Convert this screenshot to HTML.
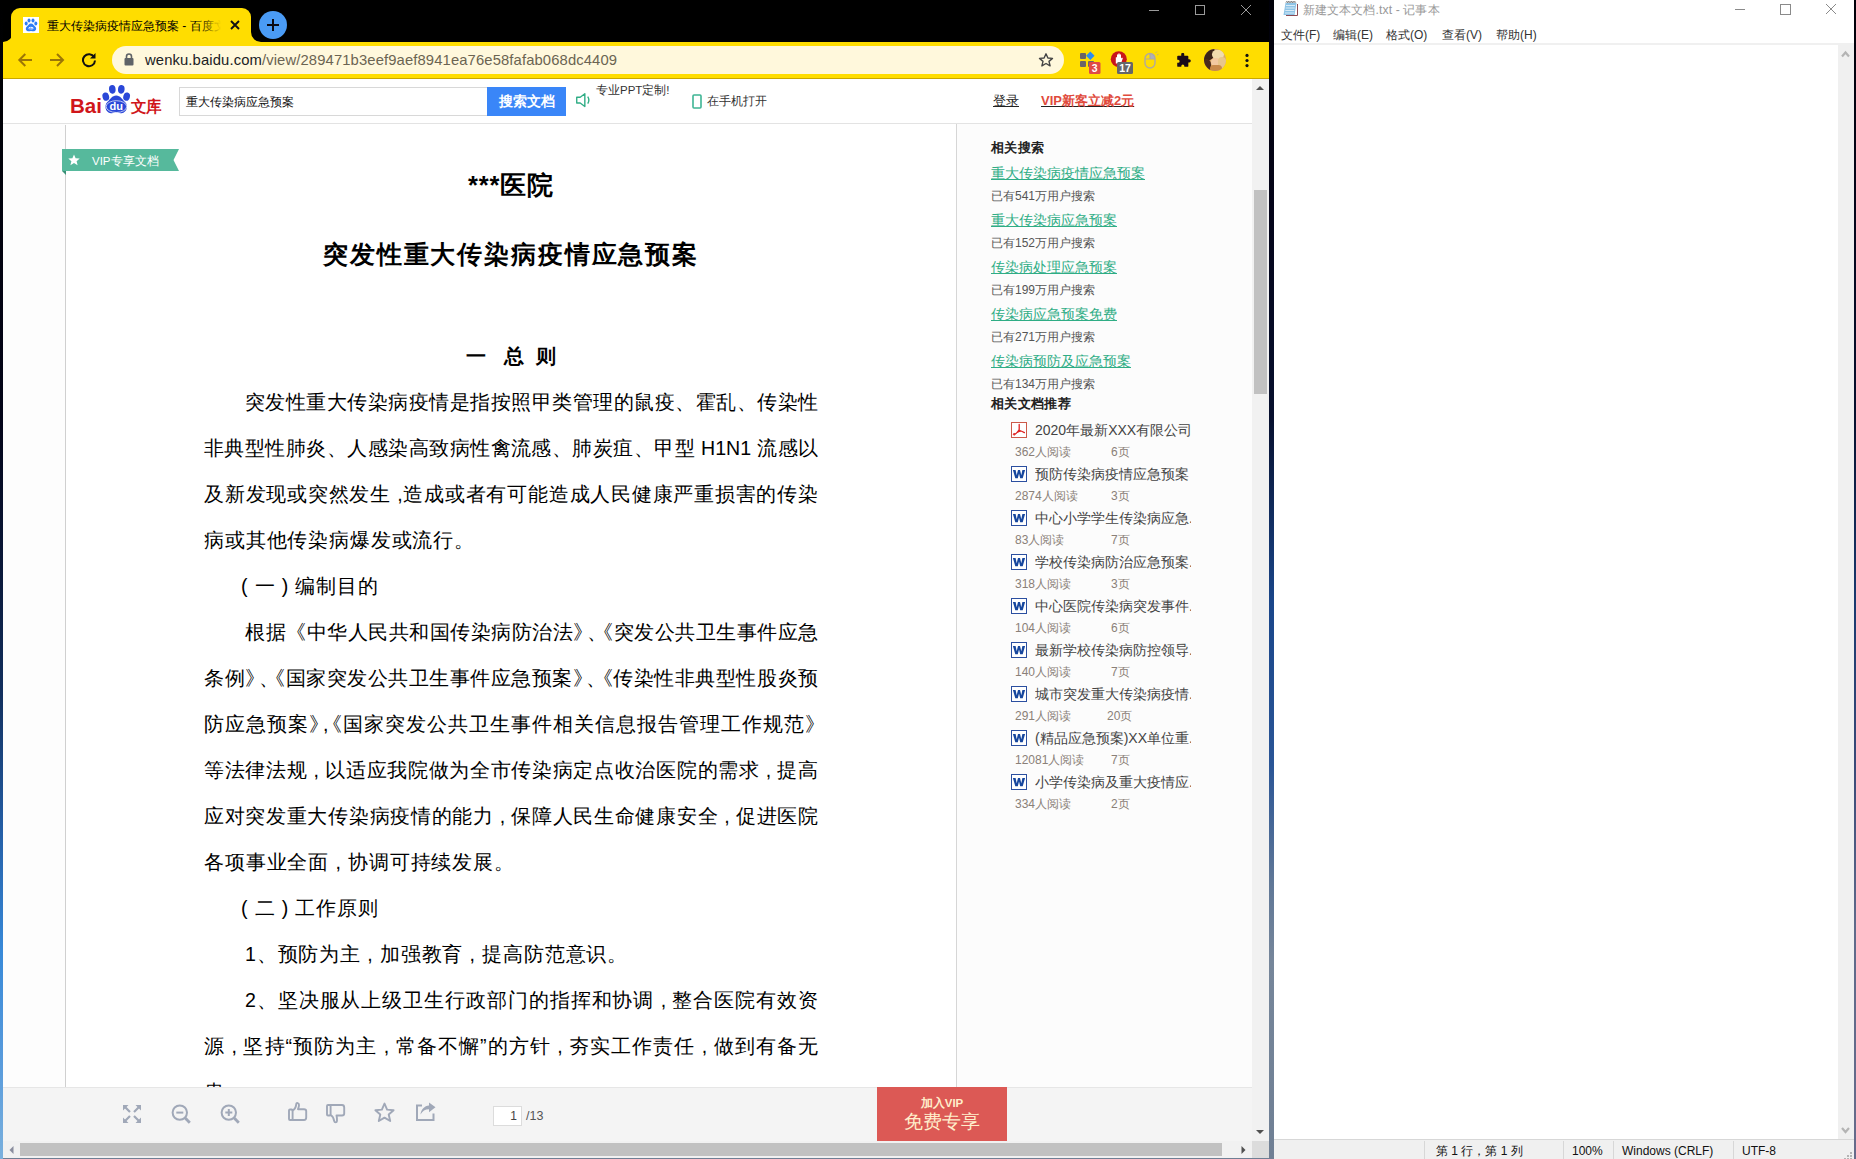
<!DOCTYPE html>
<html lang="zh">
<head>
<meta charset="utf-8">
<title>screen</title>
<style>
*{box-sizing:border-box;margin:0;padding:0}
html,body{width:1856px;height:1159px;overflow:hidden;background:#06061a;font-family:"Liberation Sans",sans-serif;}
.abs{position:absolute}
#chrome{position:absolute;left:3px;top:0;width:1266px;height:1159px;background:#000;overflow:hidden}
#tabbar{position:absolute;left:0;top:0;width:1266px;height:42px;background:#000}
#tab{position:absolute;left:8px;top:8px;width:240px;height:34px;background:#ffdd00;border-radius:9px 9px 0 0}
#toolbar{position:absolute;left:0;top:42px;width:1266px;height:37px;background:#ffdd00;border-bottom:1px solid #c9a800}
#omni{position:absolute;left:109px;top:4px;width:952px;height:28px;border-radius:14px;background:#fff8dc}
#page{position:absolute;left:0;top:79px;width:1249px;height:1062px;background:#fdfdfd;overflow:hidden}
#hdr{position:absolute;left:0;top:0;width:1250px;height:45px;background:#fff;border-bottom:1px solid #e3e3e3}
#doc{position:absolute;left:62px;top:45px;width:892px;height:970px;background:#fff;border-left:1px solid #d0d0d0;border-right:1px solid #d6d6d6}
.ln{position:absolute;left:138px;width:614px;height:30px;line-height:30px;font-size:19.600px;color:#000;white-space:nowrap;text-align:justify;text-align-last:justify;letter-spacing:0}
.ln i{font-style:normal;margin-right:-0.360em}.ln b{font-weight:normal;margin-left:-0.360em}
.ln.in{left:179px;width:573px}
.ln.l{text-align:left;text-align-last:left;letter-spacing:0.850px;width:auto}
#side{position:absolute;left:954px;top:45px;width:295px;height:970px;background:#fcfcfc}
#side .h{position:absolute;left:34px;font-size:13.400px;letter-spacing:0.350px;margin-top:1px;font-weight:bold;color:#222;white-space:nowrap;line-height:16px}
#side .a{position:absolute;left:34px;font-size:14px;color:#2fad85;text-decoration:underline;white-space:nowrap;line-height:16px}
#side .g{position:absolute;left:34px;font-size:12px;color:#555;white-space:nowrap;line-height:16px}
.it{position:absolute;left:54px;width:184px;height:44px}
.it .ic{position:absolute;left:0;top:0;width:16px;height:16px}
.it .t{position:absolute;left:24px;top:-1px;width:156px;overflow:hidden;white-space:nowrap;font-size:14px;color:#444;line-height:18px}
.it .r{position:absolute;left:4px;top:22px;font-size:12px;color:#8a8078;line-height:16px;white-space:nowrap}
.it .p{position:absolute;left:100px;top:22px;font-size:12px;color:#8a8078;line-height:16px;white-space:nowrap}
#bbar{position:absolute;left:0;top:1008px;width:1250px;height:54px;background:#f4f4f4;border-top:1px solid #e6e6e6}
#vsb{position:absolute;left:1249px;top:79px;width:17px;height:1062px;background:#f1f1f1}
#hsb{position:absolute;left:0;top:1141px;width:1266px;height:17px;background:#f1f1f1}
#np{position:absolute;left:1274px;top:0;width:580px;height:1159px;background:#fff;overflow:hidden}
#np .menu{position:absolute;top:27px;font-size:12px;color:#333;line-height:16px;white-space:nowrap}
#np .st{position:absolute;top:1143px;font-size:12px;color:#111;line-height:16px;white-space:nowrap}
#np .sep{position:absolute;top:1141px;width:1px;height:18px;background:#d7d7d7}
</style>
</head>
<body>
<div class="abs" style="left:0;top:0;width:4px;height:1159px;background:linear-gradient(to bottom,#000 0,#02030f 20%,#030418 36%,#0b1a3c 50%,#12305f 60%,#2560a8 72%,#3889d8 82%,#5a9cdc 92%,#7ab0dd 100%)"></div>
<div class="abs" style="left:1268px;top:0;width:7px;height:1159px;background:linear-gradient(to bottom,#000008 0,#05051a 18%,#07102e 36%,#1a468a 52%,#2a5596 66%,#5f7797 76%,#76869a 83%,#6f7f94 100%)"></div>
<div class="abs" style="left:1853px;top:0;width:3px;height:1159px;background:linear-gradient(to bottom,#000008 0,#05051a 18%,#07102e 36%,#1a3a70 52%,#3a4a78 66%,#5f6a8a 80%,#666a8a 100%)"></div>
<!-- CHROME WINDOW -->
<div id="chrome">
 <div id="tabbar">
  <div id="tab"></div>
  <!-- tab foot curves -->
  <svg class="abs" style="left:0;top:32px" width="10" height="10" viewBox="0 0 10 10"><path d="M0 10 H10 V0 A10 10 0 0 1 0 10Z" fill="#ffdd00"/></svg>
  <svg class="abs" style="left:248px;top:32px" width="10" height="10" viewBox="0 0 10 10"><path d="M10 10 H0 V0 A10 10 0 0 0 10 10Z" fill="#ffdd00"/></svg>
  <!-- favicon -->
  <svg class="abs" style="left:20px;top:17px" width="16" height="16" viewBox="0 0 16 16"><rect width="16" height="16" fill="#fff"/><g fill="#2f7df6"><ellipse cx="3.2" cy="6.6" rx="1.5" ry="2"/><ellipse cx="6" cy="3.4" rx="1.5" ry="2"/><ellipse cx="10" cy="3.4" rx="1.5" ry="2"/><ellipse cx="12.8" cy="6.6" rx="1.5" ry="2"/><path d="M8 6.5c2 0 3 2 4.3 3.3c1.5 1.5 1 4.2-1.3 4.4c-1.2.1-2-.3-3-.3s-1.8.4-3 .3c-2.300-.2-2.800-2.900-1.300-4.400c1.300-1.300 2.300-3.300 4.300-3.300z"/></g><ellipse cx="8" cy="11.300" rx="2.600" ry="1.500" fill="#fff"/><text x="8" y="12.600" font-size="3.600" font-weight="bold" text-anchor="middle" fill="#2f7df6" font-family="Liberation Sans, sans-serif">du</text></svg>
  <div class="abs" style="left:44px;top:17px;width:176px;height:18px;line-height:18px;font-size:12px;color:#000;white-space:nowrap;overflow:hidden">重大传染病疫情应急预案 - 百度文</div>
  <div class="abs" style="left:196px;top:14px;width:26px;height:22px;background:linear-gradient(to right,rgba(255,221,0,0),#ffdd00 85%)"></div>
  <svg class="abs" style="left:226px;top:19px" width="12" height="12" viewBox="0 0 12 12"><path d="M2 2 L10 10 M10 2 L2 10" stroke="#111" stroke-width="1.900" fill="none"/></svg>
  <!-- new tab -->
  <div class="abs" style="left:256px;top:11px;width:28px;height:28px;border-radius:14px;background:#4a9bf5"></div>
  <svg class="abs" style="left:263px;top:18px" width="14" height="14" viewBox="0 0 14 14"><path d="M7 1 V13 M1 7 H13" stroke="#0a0a14" stroke-width="2" fill="none"/></svg>
  <!-- window controls -->
  <svg class="abs" style="left:1140px;top:0" width="120" height="22" viewBox="0 0 120 22"><g stroke="#9a9a9a" stroke-width="1" fill="none"><path d="M6 10.500 H16"/><rect x="52.500" y="5.500" width="9" height="9"/><path d="M98 5 L108 15 M108 5 L98 15"/></g></svg>
 </div>
 <div id="toolbar">
  <svg class="abs" style="left:13px;top:10px" width="18" height="16" viewBox="0 0 18 16"><path d="M16 8 H4 M9.300 2 L3.300 8 L9.300 14" stroke="#9c7606" stroke-width="2" fill="none"/></svg>
  <svg class="abs" style="left:45px;top:10px" width="18" height="16" viewBox="0 0 18 16"><path d="M2 8 H14.500 M9 2 L15 8 L9 14" stroke="#9c7606" stroke-width="2" fill="none"/></svg>
  <svg class="abs" style="left:78px;top:10px" width="16" height="16" viewBox="0 0 16 16"><path d="M13.200 5.200 A6 6 0 1 0 14 8.500" stroke="#111" stroke-width="2" fill="none"/><path d="M14.500 1 V6.500 H9z" fill="#111"/></svg>
  <div id="omni">
   <svg class="abs" style="left:12px;top:7px" width="10" height="13" viewBox="0 0 10 13"><rect x="0.500" y="5" width="9" height="7.500" rx="1" fill="#5f6368"/><path d="M2.500 5.500 V3.500 A2.500 2.500 0 0 1 7.500 3.500 V5.500" stroke="#5f6368" stroke-width="1.600" fill="none"/></svg>
   <div class="abs" style="left:33px;top:4px;height:20px;line-height:20px;font-size:14.800px;color:#202124;white-space:nowrap;letter-spacing:0.120px">wenku.baidu.com<span style="color:#6b6452">/view/289471b3eef9aef8941ea76e58fafab068dc4409</span></div>
   <svg class="abs" style="left:926px;top:6px" width="16" height="16" viewBox="0 0 16 16"><path d="M8 1.800 L9.900 6 L14.500 6.400 L11 9.400 L12.100 13.900 L8 11.500 L3.900 13.900 L5 9.400 L1.500 6.400 L6.100 6z" stroke="#444" stroke-width="1.400" fill="none" stroke-linejoin="round"/></svg>
  </div>
  <!-- extensions -->
  <svg class="abs" style="left:1076px;top:6px" width="26" height="28" viewBox="0 0 26 28"><g fill="#6a6468"><rect x="1" y="5" width="6" height="6" rx="1"/><rect x="1" y="13" width="6" height="6" rx="1"/><rect x="9" y="13" width="6" height="6" rx="1"/></g><rect x="8.300" y="4.800" width="6" height="6" transform="rotate(45 11.300 7.800)" fill="#2b8cf0"/><rect x="10" y="14" width="11.500" height="12" rx="1.500" fill="#e04a46"/><text x="15.700" y="24" font-size="10.500" font-weight="bold" fill="#fff" text-anchor="middle" font-family="Liberation Sans, sans-serif">3</text></svg>
  <svg class="abs" style="left:1107px;top:6px" width="28" height="28" viewBox="0 0 28 28"><circle cx="8.800" cy="11.200" r="8" fill="#c8151b"/><path d="M5.800 15.500 V9.500 L6.300 9 L7 9.500 V6.800 L7.700 6.300 L8.300 6.800 V5.800 L9 5.300 L9.700 5.800 V6.800 L10.300 6.300 L11 6.800 V10.500 L12 9.500 L12.800 10.200 L11 15.500z" fill="#fff"/><rect x="7" y="14" width="16" height="12" rx="1.500" fill="#666668"/><text x="15" y="24" font-size="10.500" font-weight="bold" fill="#fff" text-anchor="middle" font-family="Liberation Sans, sans-serif">17</text></svg>
  <svg class="abs" style="left:1140px;top:7px" width="18" height="22" viewBox="0 0 18 22"><path d="M7 4.500 H8 A4 4 0 0 1 12 8.500 V10 H7z" fill="#aeb0ba"/><rect x="2" y="4.500" width="10" height="14.500" rx="5" stroke="#b0a8a0" stroke-width="1.400" fill="none"/><path d="M2 10 H12 M7 4.500 V10" stroke="#b0a8a0" stroke-width="1.200"/><path d="M12.500 4 l1.500 -1.500 M14 6 l1.500 -0.800" stroke="#c4b070" stroke-width="1"/></svg>
  <svg class="abs" style="left:1172px;top:11px" width="16" height="16" viewBox="0 0 18 18"><path d="M7 1.500 a1.700 1.700 0 0 1 3.400 0 V3 H14 a1 1 0 0 1 1 1 V7 h1 a1.800 1.800 0 0 1 0 3.600 h-1 V14.500 a1 1 0 0 1 -1 1 H10.500 v-1 a1.700 1.700 0 0 0 -3.400 0 v1 H3.500 a1 1 0 0 1 -1 -1 V11 h1 a1.700 1.700 0 0 0 0 -3.400 h-1 V4 a1 1 0 0 1 1 -1 H7z" fill="#1a0a18"/></svg>
  <div class="abs" style="left:1201px;top:7px;width:22px;height:22px;border-radius:11px;overflow:hidden;background:#d9a868">
   <div class="abs" style="left:-6px;top:-5px;width:17px;height:17px;border-radius:9px;background:#3a2418"></div>
   <div class="abs" style="left:-3px;top:10px;width:10px;height:14px;border-radius:5px;background:#4a2c1c"></div>
   <div class="abs" style="left:8px;top:1px;width:12px;height:9px;border-radius:5px;background:#f0dcae"></div>
   <div class="abs" style="left:7px;top:9px;width:9px;height:8px;border-radius:4px;background:#f3c9a0"></div>
   <div class="abs" style="left:14px;top:8px;width:8px;height:12px;border-radius:4px;background:#e8c68a"></div>
   <div class="abs" style="left:6px;top:16px;width:12px;height:7px;border-radius:4px;background:#c98a4a"></div>
  </div>
  <svg class="abs" style="left:1241px;top:10px" width="6" height="18" viewBox="0 0 6 18"><circle cx="3" cy="3.400" r="1.600" fill="#111"/><circle cx="3" cy="8.500" r="1.600" fill="#111"/><circle cx="3" cy="13.600" r="1.600" fill="#111"/></svg>
 </div>
 <div id="page">
  <div id="hdr">
   <!-- Baidu wenku logo -->
   <svg class="abs" style="left:66px;top:5px" width="96" height="32" viewBox="0 0 96 32">
    <text x="1" y="28.500" font-size="19.600" font-weight="bold" fill="#d0161b" font-family="Liberation Sans, sans-serif" textLength="32" lengthAdjust="spacingAndGlyphs">Bai</text>
    <g fill="#2a47d8"><ellipse cx="36.800" cy="12.600" rx="3.300" ry="4.200" transform="rotate(-15 36.800 12.600)"/><ellipse cx="43.300" cy="5.300" rx="3.300" ry="4.400" transform="rotate(-5 43.300 5.300)"/><ellipse cx="52.300" cy="5.300" rx="3.300" ry="4.400" transform="rotate(5 52.300 5.300)"/><ellipse cx="57.600" cy="12.600" rx="3.300" ry="4.200" transform="rotate(15 57.600 12.600)"/>
    <path d="M47.200 11.500c4.200 0 5.800 3.800 8.800 6.500c3.400 3 2.400 10.500-3.500 11.200c-2.400.3-3.500-.6-5.300-.6s-2.900.9-5.300.6c-5.900-.7-6.900-8.200-3.500-11.200c3-2.700 4.600-6.500 8.800-6.500z"/></g>
    <ellipse cx="47.400" cy="22.600" rx="10.300" ry="5.900" fill="none" stroke="#fff" stroke-width="0.700"/>
    <text x="47.200" y="26.300" font-size="11" font-weight="bold" fill="#fff" text-anchor="middle" font-family="Liberation Sans, sans-serif" textLength="13.500" lengthAdjust="spacingAndGlyphs">du</text>
    <text x="61.500" y="27.500" font-size="16" font-weight="bold" fill="#d0161b" font-family="Liberation Sans, sans-serif" textLength="31" lengthAdjust="spacingAndGlyphs">文库</text>
   </svg>
   <div class="abs" style="left:176px;top:8px;width:309px;height:29px;border:1px solid #d8d8d8;background:#fff"></div>
   <div class="abs" style="left:183px;top:14.500px;line-height:16px;font-size:12px;color:#111;white-space:nowrap">重大传染病应急预案</div>
   <div class="abs" style="left:484px;top:8px;width:79px;height:29px;background:#3a86f8;color:#fff;font-size:14px;font-weight:bold;text-align:center;line-height:29px;white-space:nowrap">搜索文档</div>
   <svg class="abs" style="left:572px;top:13px" width="18.500" height="16.200" viewBox="0 0 16 14"><path d="M1.500 4.500 H4.500 L8.500 1.500 V12.500 L4.500 9.500 H1.500z" stroke="#2fad85" stroke-width="1.200" fill="none" stroke-linejoin="round"/><path d="M11 4 Q13 7 11 10" stroke="#2fad85" stroke-width="1.200" fill="none"/></svg>
   <div class="abs" style="left:593px;top:3px;line-height:16px;font-size:11.500px;color:#333;white-space:nowrap">专业PPT定制!</div>
   <svg class="abs" style="left:689px;top:15px" width="10" height="15" viewBox="0 0 10 15"><rect x="1" y="1" width="8" height="13" rx="1" stroke="#3eb594" stroke-width="1.600" fill="#fff"/></svg>
   <div class="abs" style="left:704px;top:14px;line-height:16px;font-size:12px;color:#333;white-space:nowrap">在手机打开</div>
   <div class="abs" style="left:990px;top:14px;line-height:16px;font-size:13px;color:#222;text-decoration:underline;white-space:nowrap">登录</div>
   <div class="abs" style="left:1038px;top:14px;line-height:16px;font-size:13px;color:#e04a3c;text-decoration:underline;text-decoration-color:#222;white-space:nowrap;font-weight:bold;letter-spacing:0px">VIP新客立减2元</div>
  </div>
  <div id="doc">
   <div class="abs" style="left:-1px;top:0;width:1px;height:1px;background:#fdfdfd"></div>
   <div class="abs" style="left:0;top:46px;width:891px;text-align:center;font-size:25.500px;font-weight:bold;line-height:30px;color:#000;white-space:nowrap;letter-spacing:0.800px;padding-right:1px">***医院</div>
   <div class="abs" style="left:0;top:114.500px;width:891px;text-align:center;font-size:25px;font-weight:bold;line-height:30px;color:#000;white-space:nowrap;letter-spacing:1.850px;padding-right:1px">突发性重大传染病疫情应急预案</div>
   <div class="abs" style="left:0;top:217px;width:891px;text-align:center;font-size:20px;font-weight:bold;line-height:30px;color:#000;white-space:pre;letter-spacing:0.300px;padding-right:0px">一   总  则</div>
   <div class="ln in" style="top:263px">突发性重大传染病疫情是指按照甲类管理的鼠疫、霍乱、传染性</div>
   <div class="ln " style="top:309px">非典型性肺炎、人感染高致病性禽流感、肺炭疽、甲型 H1N1 流感以</div>
   <div class="ln " style="top:355px">及新发现或突然发生 ,造成或者有可能造成人民健康严重损害的传染</div>
   <div class="ln l" style="top:401px">病或其他传染病爆发或流行。</div>
   <div class="ln l" style="top:447px"><span style="margin-left:37px">( 一 ) 编制目的</span></div>
   <div class="ln in" style="top:493px">根据《中华人民共和国传染病防治法<i>》</i><i>、</i><b>《</b>突发公共卫生事件应急</div>
   <div class="ln " style="top:539px">条例<i>》</i><i>、</i><b>《</b>国家突发公共卫生事件应急预案<i>》</i><i>、</i><b>《</b>传染性非典型性股炎预</div>
   <div class="ln " style="top:585px">防应急预案<i>》</i>,<b>《</b>国家突发公共卫生事件相关信息报告管理工作规范<i>》</i></div>
   <div class="ln " style="top:631px">等法律法规 , 以适应我院做为全市传染病定点收治医院的需求 , 提高</div>
   <div class="ln " style="top:677px">应对突发重大传染病疫情的能力 , 保障人民生命健康安全 , 促进医院</div>
   <div class="ln l" style="top:723px">各项事业全面 , 协调可持续发展。</div>
   <div class="ln l" style="top:769px"><span style="margin-left:37px">( 二 ) 工作原则</span></div>
   <div class="ln l" style="top:815px"><span style="margin-left:41px">1、预防为主 , 加强教育 , 提高防范意识。</span></div>
   <div class="ln in" style="top:861px">2、坚决服从上级卫生行政部门的指挥和协调 , 整合医院有效资</div>
   <div class="ln " style="top:907px">源 , 坚持“预防为主 , 常备不懈”的方针 , 夯实工作责任 , 做到有备无</div>
   <div class="ln l" style="top:953px">患</div>
   <svg class="abs" style="left:-4px;top:25px" width="118" height="26" viewBox="0 0 118 26"><path d="M0 22 L4 26 V22z" fill="#3a8f76"/><path d="M0 0 H117 L111.500 11 L117 22 H0z" fill="#56b99c"/><path d="M12 5.500 L13.600 9.300 L17.700 9.600 L14.600 12.300 L15.600 16.300 L12 14.100 L8.400 16.300 L9.400 12.300 L6.300 9.600 L10.400 9.300z" fill="#fff"/><text x="30" y="15.500" font-size="11.500" fill="#fff" font-family="Liberation Sans, sans-serif">VIP专享文档</text></svg>
  </div>
  <div id="side">
   <div class="h" style="top:15px">相关搜索</div>
   <div class="a" style="top:41px">重大传染病疫情应急预案</div>
   <div class="g" style="top:64px">已有541万用户搜索</div>
   <div class="a" style="top:88px">重大传染病应急预案</div>
   <div class="g" style="top:111px">已有152万用户搜索</div>
   <div class="a" style="top:135px">传染病处理应急预案</div>
   <div class="g" style="top:158px">已有199万用户搜索</div>
   <div class="a" style="top:182px">传染病应急预案免费</div>
   <div class="g" style="top:205px">已有271万用户搜索</div>
   <div class="a" style="top:229px">传染病预防及应急预案</div>
   <div class="g" style="top:252px">已有134万用户搜索</div>
   <div class="h" style="top:271px">相关文档推荐</div>
   <div class="it" style="top:298px"><svg class="ic" viewBox="0 0 16 16"><rect x="0.500" y="0.500" width="15" height="15" fill="#fff" stroke="#cc5a4a"/><path d="M8.200 2.500 V7.800 M8.200 7.600 C7.200 9.800 5.200 11.600 3 12.400 M8 8.600 C9.800 8.800 11.800 9.600 13.400 10.600 M6.600 10.200 C7.800 9.400 9.200 9.200 10 9.200" fill="none" stroke="#e02222" stroke-width="1.300" stroke-linecap="round"/><circle cx="3.200" cy="12.300" r="0.900" fill="none" stroke="#e02222" stroke-width="0.900"/></svg><div class="t">2020年最新XXX有限公司</div><div class="r">362人阅读</div><div class="p" style="left:100px">6页</div></div>
   <div class="it" style="top:342px"><svg class="ic" viewBox="0 0 16 16"><rect x="0.500" y="0.500" width="15" height="15" fill="#fff" stroke="#2b4fa0"/><path d="M1.900 4 H4.600 L5.700 9.300 L7 4 H9 L10.300 9.300 L11.400 4 H14.100 L11.700 12.200 H9.200 L8 7.600 L6.800 12.200 H4.300z" fill="#17479e"/></svg><div class="t">预防传染病疫情应急预案</div><div class="r">2874人阅读</div><div class="p" style="left:100px">3页</div></div>
   <div class="it" style="top:386px"><svg class="ic" viewBox="0 0 16 16"><rect x="0.500" y="0.500" width="15" height="15" fill="#fff" stroke="#2b4fa0"/><path d="M1.900 4 H4.600 L5.700 9.300 L7 4 H9 L10.300 9.300 L11.400 4 H14.100 L11.700 12.200 H9.200 L8 7.600 L6.800 12.200 H4.300z" fill="#17479e"/></svg><div class="t">中心小学学生传染病应急.</div><div class="r">83人阅读</div><div class="p" style="left:100px">7页</div></div>
   <div class="it" style="top:430px"><svg class="ic" viewBox="0 0 16 16"><rect x="0.500" y="0.500" width="15" height="15" fill="#fff" stroke="#2b4fa0"/><path d="M1.900 4 H4.600 L5.700 9.300 L7 4 H9 L10.300 9.300 L11.400 4 H14.100 L11.700 12.200 H9.200 L8 7.600 L6.800 12.200 H4.300z" fill="#17479e"/></svg><div class="t">学校传染病防治应急预案.</div><div class="r">318人阅读</div><div class="p" style="left:100px">3页</div></div>
   <div class="it" style="top:474px"><svg class="ic" viewBox="0 0 16 16"><rect x="0.500" y="0.500" width="15" height="15" fill="#fff" stroke="#2b4fa0"/><path d="M1.900 4 H4.600 L5.700 9.300 L7 4 H9 L10.300 9.300 L11.400 4 H14.100 L11.700 12.200 H9.200 L8 7.600 L6.800 12.200 H4.300z" fill="#17479e"/></svg><div class="t">中心医院传染病突发事件.</div><div class="r">104人阅读</div><div class="p" style="left:100px">6页</div></div>
   <div class="it" style="top:518px"><svg class="ic" viewBox="0 0 16 16"><rect x="0.500" y="0.500" width="15" height="15" fill="#fff" stroke="#2b4fa0"/><path d="M1.900 4 H4.600 L5.700 9.300 L7 4 H9 L10.300 9.300 L11.400 4 H14.100 L11.700 12.200 H9.200 L8 7.600 L6.800 12.200 H4.300z" fill="#17479e"/></svg><div class="t">最新学校传染病防控领导.</div><div class="r">140人阅读</div><div class="p" style="left:100px">7页</div></div>
   <div class="it" style="top:562px"><svg class="ic" viewBox="0 0 16 16"><rect x="0.500" y="0.500" width="15" height="15" fill="#fff" stroke="#2b4fa0"/><path d="M1.900 4 H4.600 L5.700 9.300 L7 4 H9 L10.300 9.300 L11.400 4 H14.100 L11.700 12.200 H9.200 L8 7.600 L6.800 12.200 H4.300z" fill="#17479e"/></svg><div class="t">城市突发重大传染病疫情.</div><div class="r">291人阅读</div><div class="p" style="left:96px">20页</div></div>
   <div class="it" style="top:606px"><svg class="ic" viewBox="0 0 16 16"><rect x="0.500" y="0.500" width="15" height="15" fill="#fff" stroke="#2b4fa0"/><path d="M1.900 4 H4.600 L5.700 9.300 L7 4 H9 L10.300 9.300 L11.400 4 H14.100 L11.700 12.200 H9.200 L8 7.600 L6.800 12.200 H4.300z" fill="#17479e"/></svg><div class="t">(精品应急预案)XX单位重.</div><div class="r">12081人阅读</div><div class="p" style="left:100px">7页</div></div>
   <div class="it" style="top:650px"><svg class="ic" viewBox="0 0 16 16"><rect x="0.500" y="0.500" width="15" height="15" fill="#fff" stroke="#2b4fa0"/><path d="M1.900 4 H4.600 L5.700 9.300 L7 4 H9 L10.300 9.300 L11.400 4 H14.100 L11.700 12.200 H9.200 L8 7.600 L6.800 12.200 H4.300z" fill="#17479e"/></svg><div class="t">小学传染病及重大疫情应.</div><div class="r">334人阅读</div><div class="p" style="left:100px">2页</div></div>
  </div>
  <div id="bbar">
   <svg class="abs" style="left:120px;top:17px" width="18" height="18" viewBox="0 0 18 18"><g fill="#a0a8b8"><path d="M0 0 H5.500 L0 5.500z M18 0 V5.500 L12.500 0z M0 18 V12.500 L5.500 18z M18 18 H12.500 L18 12.500z"/></g><g stroke="#a0a8b8" stroke-width="2.200" fill="none"><path d="M2 2 L7 7 M16 2 L11 7 M2 16 L7 11 M16 16 L11 11"/></g></svg>
   <svg class="abs" style="left:168px;top:16px" width="21" height="21" viewBox="0 0 21 21"><g stroke="#a0a8b8" fill="none"><circle cx="8.800" cy="8.600" r="7.200" stroke-width="2"/><path d="M14.200 14 L18.800 18.800" stroke-width="2.800"/><path d="M5.300 8.600 H12.300" stroke-width="2"/></g></svg>
   <svg class="abs" style="left:217px;top:16px" width="21" height="21" viewBox="0 0 21 21"><g stroke="#a0a8b8" fill="none"><circle cx="8.800" cy="8.600" r="7.200" stroke-width="2"/><path d="M14.200 14 L18.800 18.800" stroke-width="2.800"/><path d="M5.300 8.600 H12.300 M8.800 5.100 V12.100" stroke-width="2"/></g></svg>
   <svg class="abs" style="left:285px;top:14px" width="20" height="20" viewBox="0 0 20 20"><g stroke="#a0a8b8" stroke-width="1.900" fill="none" stroke-linejoin="round" stroke-linecap="round"><rect x="1" y="7.500" width="3.600" height="10.500" rx="1"/><path d="M4.600 8.500 C6.500 7.500 8 4.500 8.300 1.800 C8.500 0.600 11 0.800 11 3 C11 4.500 10.500 6 10 7.200 H16 C17.500 7.200 18.200 8 18.200 9 V15.500 C18.200 17 17.200 18 16 18 H4.600"/></g></svg>
   <svg class="abs" style="left:323px;top:16px" width="20" height="20" viewBox="0 0 20 20"><g stroke="#a0a8b8" stroke-width="1.900" fill="none" stroke-linejoin="round" stroke-linecap="round"><rect x="1" y="1" width="3.600" height="10.500" rx="1"/><path d="M4.600 1 H16 C17.200 1 18.200 2 18.200 3.500 V9.500 C18.200 10.800 17.500 11.500 16 11.500 H10.500 C11 13.500 11.200 15 11 17 C10.800 18.800 8.500 18.800 8.200 17 C7.800 14.500 6.500 12 4.600 11"/></g></svg>
   <svg class="abs" style="left:371px;top:14px" width="21" height="21" viewBox="0 0 21 21"><path d="M10.500 1.500 L13.100 7.600 L19.600 8.200 L14.700 12.500 L16.200 19 L10.500 15.600 L4.800 19 L6.300 12.500 L1.400 8.200 L7.900 7.600z" stroke="#a0a8b8" stroke-width="1.900" fill="none" stroke-linejoin="round"/></svg>
   <svg class="abs" style="left:413px;top:14px" width="20" height="20" viewBox="0 0 20 20"><path d="M6 3.500 H1 V18 H17.500 V11.500" stroke="#a0a8b8" stroke-width="2" fill="none"/><path d="M13 0.500 L19.500 5.300 L13 10.200 V7.300 C9 7.300 6.500 9 4.500 12.500 C5 7.500 8.500 3.800 13 3.500z" fill="#a0a8b8"/></svg>
   <div class="abs" style="left:490px;top:18px;width:29px;height:20px;border:1px solid #dcdcdc;background:#fff;font-size:12px;line-height:19px;color:#444;text-align:right;padding-right:4px">1</div>
   <div class="abs" style="left:523px;top:20px;font-size:12.500px;line-height:16px;color:#555;white-space:nowrap">/13</div>
   <div class="abs" style="left:874px;top:-1px;width:130px;height:55px;background:#dc5955"></div>
   <div class="abs" style="left:874px;top:8px;width:130px;text-align:center;font-size:11.500px;line-height:14px;color:#ffeecb;font-weight:bold;white-space:nowrap">加入VIP</div>
   <div class="abs" style="left:874px;top:22px;width:130px;text-align:center;font-size:19px;line-height:24px;color:#ffeecb;white-space:nowrap;font-weight:500">免费专享</div>
  </div>
 </div>
 <div class="abs" style="left:0;top:1158px;width:1266px;height:1px;background:#6f7f94"></div>
 <div id="vsb">
  <svg class="abs" style="left:4px;top:6px" width="8" height="6" viewBox="0 0 8 6"><path d="M0 5 L4 1 L8 5z" fill="#505050"/></svg>
  <div class="abs" style="left:2px;top:111px;width:13px;height:204px;background:#c1c1c1"></div>
  <svg class="abs" style="left:4px;top:1050px" width="8" height="6" viewBox="0 0 8 6"><path d="M0 1 L4 5 L8 1z" fill="#505050"/></svg>
 </div>
 <div id="hsb">
  <svg class="abs" style="left:6px;top:5px" width="5" height="8" viewBox="0 0 5 8"><path d="M4.500 0 L0.500 4 L4.500 8z" fill="#8a8d9e"/></svg>
  <div class="abs" style="left:17px;top:2px;width:1202px;height:13px;background:#c1c1c1"></div>
  <svg class="abs" style="left:1238px;top:5px" width="5" height="8" viewBox="0 0 5 8"><path d="M0.500 0 L4.500 4 L0.500 8z" fill="#505050"/></svg>
  <div class="abs" style="left:1249px;top:0;width:17px;height:17px;background:#dcdcdc"></div>
 </div>
</div>
<!-- NOTEPAD -->
<div id="np">
 <svg class="abs" style="left:8px;top:1px" width="18" height="17" viewBox="0 0 18 17"><path d="M4 14.500 H15.500 V3" stroke="#8c4a52" stroke-width="1" fill="none"/><path d="M3.500 2 H14.500 L12.500 14 H1.500z" fill="#8fc4e6"/><path d="M4 4.500 H13 M3.700 7 H12.700 M3.300 9.500 H12.300 M3 12 H12" stroke="#d8ecf8" stroke-width="1"/><path d="M4 1.500 l.800 -1 l.800 1 l.800 -1 l.800 1 l.800 -1 l.800 1 l.800 -1 l.800 1 l.800 -1 l.800 1 l.800 -1 l.800 1" stroke="#333" stroke-width="0.800" fill="none"/></svg>
 <div class="abs" style="left:29px;top:1.500px;font-size:12.200px;line-height:16px;color:#999;white-space:nowrap;letter-spacing:0.100px">新建文本文档.txt - 记事本</div>
 <svg class="abs" style="left:455px;top:0" width="120" height="20" viewBox="0 0 120 20"><g stroke="#8a8a8a" stroke-width="1" fill="none"><path d="M6 9.500 H16"/><rect x="51.500" y="4.500" width="10" height="10"/><path d="M97 4 L107 14 M107 4 L97 14"/></g></svg>
 <div class="menu" style="left:7px">文件(F)</div>
 <div class="menu" style="left:59px">编辑(E)</div>
 <div class="menu" style="left:112px">格式(O)</div>
 <div class="menu" style="left:168px">查看(V)</div>
 <div class="menu" style="left:222px">帮助(H)</div>
 <div class="abs" style="left:0;top:43px;width:580px;height:2px;background:#f0f0f0"></div>
 <!-- scrollbar -->
 <div class="abs" style="left:564px;top:43px;width:16px;height:1097px;background:#f0f0f0"></div>
 <svg class="abs" style="left:567px;top:50px" width="9" height="8" viewBox="0 0 9 8"><path d="M1 6.500 L4.500 2.500 L8 6.500" stroke="#b4b4b4" stroke-width="2.200" fill="none"/></svg>
 <svg class="abs" style="left:567px;top:1126px" width="9" height="8" viewBox="0 0 9 8"><path d="M1 2 L4.500 6 L8 2" stroke="#b4b4b4" stroke-width="2.200" fill="none"/></svg>
 <!-- status bar -->
 <div class="abs" style="left:0;top:1139px;width:580px;height:20px;background:#f0f0f0;border-top:1px solid #d7d7d7"></div>
 <div class="sep" style="left:150px"></div><div class="sep" style="left:289px"></div><div class="sep" style="left:339px"></div><div class="sep" style="left:459px"></div>
 <div class="st" style="left:162px">第 1 行，第 1 列</div>
 <div class="st" style="left:298px">100%</div>
 <div class="st" style="left:348px">Windows (CRLF)</div>
 <div class="st" style="left:468px">UTF-8</div>
 <svg class="abs" style="left:567px;top:1148px" width="12" height="11" viewBox="0 0 12 11"><g fill="#b4b4b4"><rect x="9" y="4" width="2" height="2"/><rect x="6" y="7" width="2" height="2"/><rect x="9" y="7" width="2" height="2"/><rect x="3" y="10" width="2" height="1"/><rect x="6" y="10" width="2" height="1"/><rect x="9" y="10" width="2" height="1"/></g></svg>
</div>
</body>
</html>
